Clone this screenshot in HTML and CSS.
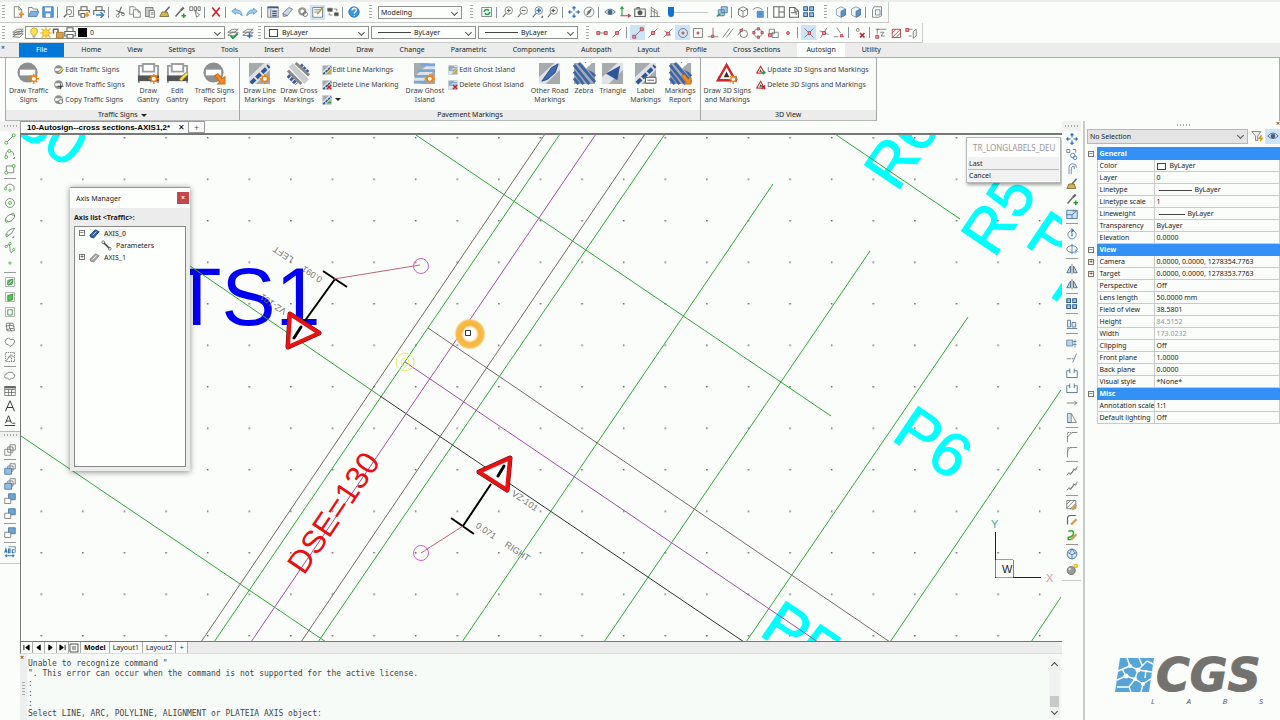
FILE: index.html
```html
<!DOCTYPE html>
<html lang="en">
<head>
<meta charset="utf-8">
<title>Autosign - Axis Manager</title>
<link rel="stylesheet" href="styles.css">
</head>
<body>
<svg class="defs" aria-hidden="true">
<symbol id="new" viewBox="0 0 16 16"><path d="M3 1h6l4 4v10H3zM9 1v4h4"/><path stroke="#f08a1c" stroke-width="2" d="M12 8v7M9 11h7"/></symbol>
<symbol id="open" viewBox="0 0 16 16"><path d="M2 14V2h5l1 2h6v3"/><path fill="#7db0de" stroke="#3d78b4" d="M2 14l3-7h11l-3 7z"/></symbol>
<symbol id="save" viewBox="0 0 16 16"><path fill="#5b9bd9" stroke="#3474b5" d="M1 1h14v14H1z"/><path fill="#fff" stroke="none" d="M4 2h8v5H4zM5 10h6v5H5z"/></symbol>
<symbol id="preview" viewBox="0 0 16 16"><path d="M5 9V1h9v13H8"/><circle cx="8" cy="8" r="3.500"/><path stroke-width="2" d="M5 11l-4 4"/></symbol>
<symbol id="print" viewBox="0 0 16 16"><path stroke-width="1.500" d="M4 6V1h8v5M3 12H1V6h14v6h-2M4 10h8v5H4z"/></symbol>
<symbol id="plot" viewBox="0 0 16 16"><path stroke-width="1.500" d="M4 6V1h8v5M3 12H1V6h14v3M4 10h5v5H4z"/><path stroke="#f08a1c" stroke-width="2" d="M12 8v7M9 12h6"/></symbol>
<symbol id="publish" viewBox="0 0 16 16"><path stroke-width="1.500" d="M4 6V1h8v5M1 12V6h14v3"/><path stroke="#2d84d0" stroke-width="2" d="M4 12h10M10 8l4 4-4 4"/></symbol>
<symbol id="cut" viewBox="0 0 16 16"><path stroke-width="1.500" d="M10 1L6 11M3 6l10 4"/><circle cx="5" cy="13" r="2"/><circle cx="12" cy="11" r="2"/></symbol>
<symbol id="copy" viewBox="0 0 16 16"><path d="M5 11H1V1h6l2 2v2M6 5h6l3 3v7H6zM12 5v3h3"/></symbol>
<symbol id="paste" viewBox="0 0 16 16"><path fill="#ccc" d="M2 2h10v4H7v8H2z"/><path fill="#fff" d="M7 6h7v9H7zM9 9h4M9 11h4"/></symbol>
<symbol id="brush" viewBox="0 0 16 16"><path d="M14 1L8 8" stroke-width="2"/><path fill="#d9b64c" stroke="#6b5a2c" d="M1 14l3-6h7l2 6z"/></symbol>
<symbol id="dropper" viewBox="0 0 16 16"><path stroke-width="3" d="M9 6l4-4"/><path stroke-width="2" d="M9 6l-7 8"/><path stroke="#1da51d" stroke-width="2" d="M13 10v6M10 13h6"/></symbol>
<symbol id="selsim" viewBox="0 0 16 16"><path stroke="#555" d="M1 1h4v5H1zM7 1h3v5H7zM12 1h3v5h-3zM8 6l2 9 4-3-6-6"/></symbol>
<symbol id="del" viewBox="0 0 16 16"><path stroke="#d3202a" stroke-width="2.200" d="M3 2l10 12M13 2L3 14"/></symbol>
<symbol id="undo" viewBox="0 0 16 16"><path fill="#9fcdf0" stroke="#4b8fcb" d="M1 7l5-4v2q8 0 9 8-3-4-9-4v2z"/></symbol>
<symbol id="redo" viewBox="0 0 16 16"><path fill="#9fcdf0" stroke="#4b8fcb" d="M15 7l-5-4v2Q2 5 1 13q3-4 9-4v2z"/></symbol>
<symbol id="props" viewBox="0 0 16 16"><path fill="#e4e9ee" d="M1 1h14v14H1zM5 4v11"/><path stroke="#315f93" stroke-width="2" d="M1 2h14M7 7h6M7 10h6M7 13h6"/></symbol>
<symbol id="eraser" viewBox="0 0 16 16"><path fill="#c4dcf1" d="M1 10L9 2l5 2-7 9-5 1zM1 10l6 3"/></symbol>
<symbol id="gear" viewBox="0 0 16 16"><circle cx="7" cy="7" r="4" stroke-width="3" stroke="#999"/><circle cx="11" cy="11" r="3" stroke="#555"/></symbol>
<symbol id="note" viewBox="0 0 16 16"><path fill="#fff" d="M1 2h13v13H1zM3 5h8M3 8h5"/><path stroke="#bd9542" stroke-width="2" d="M15 1L7 11"/></symbol>
<symbol id="swap" viewBox="0 0 16 16"><path fill="#555" d="M1 3h6v4H1zM10 9h5v4h-5z"/><path d="M9 4h4v3M3 9v3h4"/></symbol>
<symbol id="help" viewBox="0 0 16 16"><circle cx="8" cy="8" r="7" fill="#3697e3" stroke="#1b71ba"/><path stroke="#fff" stroke-width="1.800" d="M5.500 6q0-3 3-3t2.500 3q-.5 1.500-2.500 3v1M8.500 12v1"/></symbol>
<symbol id="regen" viewBox="0 0 16 16"><path d="M1 2h13v12H1z"/><path stroke="#1ca04a" stroke-width="2" d="M4 8q1-4 5-3l2 1M12 8q-1 4-5 3l-2-1"/></symbol>
<symbol id="zin" viewBox="0 0 16 16"><circle cx="9" cy="6" r="5"/><path stroke-width="1.500" d="M5 10l-4 5M6.500 6h5M9 3.500v5"/></symbol>
<symbol id="zout" viewBox="0 0 16 16"><circle cx="9" cy="6" r="5"/><path stroke-width="1.500" d="M5 10l-4 5M6.500 6h5"/></symbol>
<symbol id="zext" viewBox="0 0 16 16"><circle cx="9" cy="6" r="5"/><path stroke="#2b6fb2" stroke-width="2" d="M6 6h6M9 3v6"/><path stroke-width="1.500" d="M5 10l-4 5M14 13v2h-2"/></symbol>
<symbol id="zprev" viewBox="0 0 16 16"><circle cx="9" cy="6" r="5"/><path stroke-width="1.500" d="M5 10l-4 5M11 6H7l2-2M7 6l2 2"/></symbol>
<symbol id="move" viewBox="0 0 16 16"><path stroke="#2b6fb2" stroke-width="1.500" d="M8 1v5M8 10v5M1 8h5M10 8h5M6 3l2-2 2 2M6 13l2 2 2-2M3 6L1 8l2 2M13 6l2 2-2 2"/></symbol>
<symbol id="compass" viewBox="0 0 16 16"><circle cx="8" cy="8" r="6.500"/><path fill="#666" d="M11 4l-2 5-4 3 2-5z"/></symbol>
<symbol id="eye" viewBox="0 0 16 16"><path fill="#cfe0ef" stroke="#456" d="M1 8q7-8 14 0-7 7-14 0z"/><circle cx="8" cy="8" r="2.500" fill="#36699c" stroke="#345"/></symbol>
<symbol id="axes" viewBox="0 0 16 16"><path stroke="#2a9c3a" stroke-width="1.500" d="M4 13V1M2 4l2-3 2 3"/><path stroke="#cd3a3a" stroke-width="1.500" d="M2 13h13M12 11l3 2-3 2"/></symbol>
<symbol id="camera" viewBox="0 0 16 16"><path stroke-width="1.500" d="M1 4h14v10H1zM4 4V2h3v2"/><circle cx="8" cy="9" r="3" fill="#555"/></symbol>
<symbol id="building" viewBox="0 0 16 16"><path d="M3 1v14M3 2l8 5v8M1 14h14M3 6l8 4M7 5v9"/></symbol>
<symbol id="viewport" viewBox="0 0 16 16"><path fill="#a8ccea" stroke="#33638f" d="M7 1h8v8H7zM3 5h8v8H3z"/><path stroke="#1ca04a" stroke-width="2" d="M1 14l5-4"/></symbol>
<symbol id="cube" viewBox="0 0 16 16"><path d="M2 4l6-3 6 3v8l-6 3-6-3zM2 4l6 3 6-3M8 7v8"/></symbol>
<symbol id="cubeb" viewBox="0 0 16 16"><path fill="#eef4fa" stroke="#7a8a9a" d="M2 4l6-3 6 3v8l-6 3-6-3z"/><path fill="#5c91c7" stroke="#5277a0" d="M8 7l6-3v8l-6 3z"/></symbol>
<symbol id="cubel" viewBox="0 0 16 16"><path fill="#fff" d="M4 1h10v12l-4 2H2V5z"/><path stroke="#416f9f" d="M6 5h6v7H6z"/></symbol>
<symbol id="viewsave" viewBox="0 0 16 16"><path d="M1 5q6-6 13 0"/><path fill="#5b9bd9" stroke="#3474b5" d="M7 7h8v8H7zM9 11h4"/></symbol>
<symbol id="panes" viewBox="0 0 16 16"><path stroke-width="1.400" d="M1 1h14v14H1zM8 1v14M8 8h7"/></symbol>
<symbol id="sheet" viewBox="0 0 16 16"><path stroke-width="1.400" d="M2 2h7l5 5v8H2zM9 2v5h5M4 9h7v3"/></symbol>
<symbol id="array" viewBox="0 0 16 16"><path fill="#9dc2e4" stroke="#2f6294" stroke-width="1.400" d="M1 1h5v5H1zM9 1h5v5H9zM1 9h5v5H1zM9 9h5v5H9z"/></symbol>
<symbol id="layers" viewBox="0 0 16 16"><path fill="#eee" d="M1 13l6-4h8l-5 5zM1 10l6-4h8l-5 4zM1 7l6-4h8l-5 4z"/></symbol>
<symbol id="layerok" viewBox="0 0 16 16"><path fill="#eee" d="M1 11l6-4h8l-5 5zM1 7l6-4h8l-5 4z"/><path stroke="#1b9a3f" stroke-width="2.400" d="M5 12l3 3 6-6"/></symbol>
<symbol id="layerarr" viewBox="0 0 16 16"><path fill="#eee" d="M1 11l6-4h8l-5 5zM1 7l6-4h8l-5 4z"/><path stroke="#2d74b8" stroke-width="2" d="M10 8v7M7 12h7"/></symbol>
<symbol id="bulb" viewBox="0 0 16 16"><path fill="#ffe45c" stroke="#c29a15" d="M6 11Q2 7 4 3q4-4 8 0 2 4-2 8z"/><path d="M6 13h4M7 15h2"/></symbol>
<symbol id="sun" viewBox="0 0 16 16"><path stroke="#eab31c" stroke-width="1.500" d="M8 0v16M0 8h16M2 2l12 12M14 2L2 14"/><circle cx="8" cy="8" r="4.500" fill="#ffd83d" stroke="#e0a617"/></symbol>
<symbol id="lock" viewBox="0 0 16 16"><path stroke-width="2" d="M2 9V3h6v5"/><path fill="#d9a04c" stroke="#9a6a22" d="M6 7h9v8H6z"/></symbol>
<symbol id="s-ends" viewBox="0 0 16 16"><path d="M3 8h10"/><path class="pt" d="M1 6h4v4H1zM11 6h4v4h-4z"/></symbol>
<symbol id="s-diag" viewBox="0 0 16 16"><path d="M2 14L14 2"/><path class="pt" d="M1 11h4v4H1zM11 1h4v4h-4z"/></symbol>
<symbol id="s-mid" viewBox="0 0 16 16"><path d="M2 14L14 2"/><path class="pt" d="M6 6h4v4H6z"/></symbol>
<symbol id="s-near" viewBox="0 0 16 16"><path d="M2 14L14 2M3 5l9 6"/><path class="pt" d="M6 7h4v4H6z"/></symbol>
<symbol id="s-cen" viewBox="0 0 16 16"><circle cx="8" cy="8" r="6"/><circle class="pt" cx="8" cy="8" r="1.500"/></symbol>
<symbol id="s-node" viewBox="0 0 16 16"><path d="M2 2h12v12H2z"/><circle class="pt" cx="8" cy="8" r="1.500"/></symbol>
<symbol id="s-perp" viewBox="0 0 16 16"><path stroke="#a33" d="M8 1v12"/><path d="M1 13h14"/><path class="pt" d="M6 11h3v3H6z"/></symbol>
<symbol id="s-par" viewBox="0 0 16 16"><path d="M1 14L10 2M6 14l9-12"/></symbol>
<symbol id="s-tan" viewBox="0 0 16 16"><circle cx="9" cy="9" r="5"/><path d="M1 11L8 1"/><path class="pt" d="M4 3h3v3H4z"/></symbol>
<symbol id="s-quad" viewBox="0 0 16 16"><circle cx="8" cy="8" r="5.500"/><path class="pt" d="M7 1h3v3H7zM7 12h3v3H7zM1 6h3v3H1zM12 6h3v3h-3z"/></symbol>
<symbol id="s-ins" viewBox="0 0 16 16"><path d="M3 3h7v6H3zM7 7h8v7H7z"/><path class="pt" d="M2 9h4v4H2z"/></symbol>
<symbol id="s-pt" viewBox="0 0 16 16"><circle class="pt" cx="8" cy="8" r="2"/></symbol>
<symbol id="s-x" viewBox="0 0 16 16"><path d="M2 2l12 12M14 2L2 14"/><path class="pt" d="M7 6h3v4H7z"/></symbol>
<symbol id="s-xx" viewBox="0 0 16 16"><path d="M3 15l9-14M2 5l12 5"/><path class="pt" d="M6 6h4v4H6z"/></symbol>
<symbol id="s-ext" viewBox="0 0 16 16"><path d="M5 1l5 7M1 13h6M9 13h6"/><path class="pt" d="M10 10h3v3h-3z"/></symbol>
<symbol id="s-off" viewBox="0 0 16 16"><circle cx="5" cy="4" r="2"/><path stroke="#c2222c" stroke-width="2.200" d="M8 8l6 6M14 8l-6 6"/></symbol>
<symbol id="s-z" viewBox="0 0 16 16"><path d="M3 9V3h12M7 7h5l-4 5h5M1 3h4"/><path class="pt" d="M1 11h4v4H1z"/></symbol>
<symbol id="s-hatch" viewBox="0 0 16 16"><path stroke="#a6252f" d="M3 3h11v11H3zM3 8l5-5M3 14L14 3M8 14l6-6"/></symbol>
<symbol id="s-3d" viewBox="0 0 16 16"><path d="M3 3h7M5 12h4M11 6l4-3v9l-4 3z"/><path class="pt" d="M1 2h4v4H1z"/></symbol>
<symbol id="d-line" viewBox="0 0 16 16"><path d="M3 13L13 3"/><circle class="gn" cx="3" cy="13" r="2"/><circle class="gn" cx="13" cy="3" r="2"/></symbol>
<symbol id="d-pline" viewBox="0 0 16 16"><path d="M3 12q-2-8 4-8 6 0 6 6"/><circle class="gn" cx="3" cy="12" r="2"/><circle class="gn" cx="7" cy="4" r="2"/><path d="M14 12v2h-2"/></symbol>
<symbol id="d-rect" viewBox="0 0 16 16"><path d="M3 4h10v9H3z"/><circle class="gn" cx="3" cy="13" r="2"/><circle class="gn" cx="13" cy="4" r="2"/></symbol>
<symbol id="d-arc" viewBox="0 0 16 16"><path d="M2 9q1-7 7-6 6 2 4 8"/><circle class="gn" cx="2" cy="9" r="1.500"/><circle class="gn" cx="8" cy="11" r="1.500"/></symbol>
<symbol id="d-circ" viewBox="0 0 16 16"><circle cx="8" cy="8" r="6"/><circle class="gn" cx="8" cy="8" r="2"/></symbol>
<symbol id="d-ell" viewBox="0 0 16 16"><ellipse cx="8" cy="8" rx="7" ry="4" transform="rotate(-35 8 8)"/><circle class="gn" cx="3" cy="12" r="1.500"/><circle class="gn" cx="12" cy="3" r="1.500"/></symbol>
<symbol id="d-ella" viewBox="0 0 16 16"><path d="M3 13q-2-4 3-8t8-3q-3 8-11 11M13 12v2h-2"/><circle class="gn" cx="4" cy="11" r="1.500"/></symbol>
<symbol id="d-spl" viewBox="0 0 16 16"><path d="M3 6q5-6 5 3t5 2"/><circle class="gn" cx="3" cy="6" r="1.500"/><circle class="gn" cx="8" cy="2" r="1.500"/><circle class="gn" cx="13" cy="10" r="1.500"/></symbol>
<symbol id="d-pt" viewBox="0 0 16 16"><circle class="gn" cx="8" cy="8" r="1.500"/></symbol>
<symbol id="d-hatch" viewBox="0 0 16 16"><path stroke="#999" d="M2 2h12v12H2z"/><path fill="#a5dca0" stroke="#27852a" d="M5 6l7-2-1 7-6 1zM5 9l5-4M6 12l6-5"/></symbol>
<symbol id="d-grad" viewBox="0 0 16 16"><path stroke="#999" d="M2 2h12v12H2z"/><path fill="#57c24e" stroke="#27852a" d="M5 6l7-2-1 8-6 1z"/></symbol>
<symbol id="d-bnd" viewBox="0 0 16 16"><path stroke="#999" d="M2 2h12v12H2z"/><path stroke="#27852a" d="M5 5h6v7H5z"/></symbol>
<symbol id="d-reg" viewBox="0 0 16 16"><path d="M3 3h9l2 10H4zM2 7q6-3 12 0M3 12q5-3 10-2M8 2q-3 6 2 12"/></symbol>
<symbol id="d-cloud" viewBox="0 0 16 16"><path d="M3 4q3-3 6 1 5-2 5 3-1 4-6 6-2-3-5-3-3-4 0-7z"/></symbol>
<symbol id="d-wipe" viewBox="0 0 16 16"><path stroke-dasharray="2 1" d="M2 2h12v12H2zM5 8h5v5"/><path d="M3 13L9 5l4 3"/></symbol>
<symbol id="d-rev" viewBox="0 0 16 16"><path d="M4 5q1-3 4-2 4-1 4 2 4 1 2 4-1 3-4 2-3 4-5 0-5 0-4-3 0-3 3-3z"/></symbol>
<symbol id="d-tab" viewBox="0 0 16 16"><path fill="#fff" d="M1 2h14v12H1zM1 6h14M1 10h14M6 6v8M10 6v8"/><path fill="#666" d="M1 2h14v2H1z"/></symbol>
<symbol id="d-A" viewBox="0 0 16 16"><path stroke="#333" stroke-width="1.300" d="M2 15L8 1l6 14M4 10h8"/></symbol>
<symbol id="d-Au" viewBox="0 0 16 16"><path stroke="#333" stroke-width="1.200" d="M2 11L6 1l4 10M3 8h6M1 14h14M11 11h4"/></symbol>
<symbol id="o-stack" viewBox="0 0 16 16"><path fill="#fff" d="M8 1h7v7H8zM5 4h7v7H5zM1 7h8v8H1z"/></symbol>
<symbol id="o-front" viewBox="0 0 16 16"><path fill="#fff" d="M8 1h7v7H8zM5 4h7v7H5z"/><path fill="#8fc0ea" stroke="#3a6e9f" d="M1 7h9v8H1z"/></symbol>
<symbol id="o-back" viewBox="0 0 16 16"><path fill="#6aa5da" stroke="#3a6e9f" d="M6 1h9v8H6z"/><path fill="#fff" d="M1 7h8v7H1z"/></symbol>
<symbol id="o-abc" viewBox="0 0 16 16"><path d="M6 1h9v8"/><path stroke="#2f76b5" stroke-width="1.500" d="M1 9l1.500-5L4 9M6 4v5h2V4zM14 5h-3v4h3M1 13h13M3 11v4M12 11v4"/></symbol>
<symbol id="m-copy" viewBox="0 0 16 16"><path d="M1 2h4v4H1zM9 2h4v4"/><circle cx="9" cy="10" r="3" stroke="#2b6fb2"/><circle cx="12" cy="13" r="2.500" stroke="#2b6fb2"/></symbol>
<symbol id="m-off" viewBox="0 0 16 16"><path stroke="#4a6f93" d="M4 15V7q0-6 5-6t5 5M7 15V8q0-4 4-4v4"/></symbol>
<symbol id="m-scale" viewBox="0 0 16 16"><path fill="#cfe2f3" stroke="#2b6090" d="M1 3h14v11H1zM1 9h7v5M9 4h5M8 9l5-4"/></symbol>
<symbol id="m-rot" viewBox="0 0 16 16"><circle cx="8" cy="9" r="5.500" stroke="#41678c"/><path stroke="#2b6fb2" stroke-width="1.500" d="M8 7v4M7 1l3 2-3 3"/></symbol>
<symbol id="m-rot3" viewBox="0 0 16 16"><ellipse cx="8" cy="8" rx="7" ry="4.500" stroke="#41678c"/><path stroke="#2b6fb2" d="M8 1v14M12 9l3 2-3 3"/></symbol>
<symbol id="m-mir" viewBox="0 0 16 16"><path fill="#b8d4ec" stroke="#35597d" d="M1 13l5-9v9zM15 13l-5-9v9z"/><path d="M8 1v14"/></symbol>
<symbol id="m-align" viewBox="0 0 16 16"><path fill="#dce8f3" stroke="#41678c" d="M2 3h4v9H2zM8 6h5v6H8zM1 14h14"/></symbol>
<symbol id="m-str" viewBox="0 0 16 16"><path fill="#b8d4ec" stroke="#54799d" d="M1 4h8v8H1zM9 6h5M9 10h5M12 3v11"/></symbol>
<symbol id="m-trim" viewBox="0 0 16 16"><path d="M1 9h6M9 14l5-12"/><path stroke="#2b6fb2" d="M8 9h2"/></symbol>
<symbol id="m-brk" viewBox="0 0 16 16"><path stroke="#355b80" d="M5 5H1v9h14V5h-4M5 2v6M11 2v6"/></symbol>
<symbol id="m-join" viewBox="0 0 16 16"><path d="M1 8h14M11 5l3 3-3 3"/></symbol>
<symbol id="m-tri" viewBox="0 0 16 16"><path fill="#cddfee" stroke="#54799d" d="M2 2h5v12H2z"/><path d="M7 2l7 12H2"/></symbol>
<symbol id="m-cham" viewBox="0 0 16 16"><path d="M2 15V8l6-6h7"/><path stroke-dasharray="2 1" d="M2 8V2h6"/></symbol>
<symbol id="m-fil" viewBox="0 0 16 16"><path d="M2 15V8q0-6 7-6h6"/><path stroke-dasharray="2 1" d="M2 8V2h6"/></symbol>
<symbol id="m-chain" viewBox="0 0 16 16"><path d="M1 14l3-4 2 3 3-4 1-4 3 2 2-5M5 12l8-7"/></symbol>
<symbol id="m-eh" viewBox="0 0 16 16"><path d="M1 2h12v11H1zM1 7l5-5M1 12L11 2M6 13l7-7"/><path stroke="#d39a49" stroke-width="3" d="M14 8l-6 6"/></symbol>
<symbol id="m-ep" viewBox="0 0 16 16"><path stroke="#41678c" stroke-width="1.500" d="M2 14V6q0-4 4-4h7"/><path stroke="#d39a49" stroke-width="3" d="M14 7l-7 7"/></symbol>
<symbol id="m-es" viewBox="0 0 16 16"><path class="gs" d="M3 3q8-2 7 3t-7 5v3h4"/><path stroke="#d39a49" stroke-width="3" d="M14 7l-7 7"/></symbol>
<symbol id="m-net" viewBox="0 0 16 16"><circle cx="8" cy="8" r="6.500" fill="#d6e6f4" stroke="#35597d"/><path stroke="#2b6fb2" d="M2 6l6 3 6-3M8 9v6M8 1L5 7M8 1l4 6"/></symbol>
<symbol id="m-sph" viewBox="0 0 16 16"><circle cx="7" cy="10" r="5.500" fill="#999"/><circle cx="5" cy="8" r="1.500" fill="#eee" stroke="none"/><path fill="#ffe23d" stroke="#cda812" d="M11 2h4v4h-4z"/></symbol>
<symbol id="star" viewBox="0 0 12 12"><circle cx="6" cy="6" r="3" fill="#fff" stroke="#f07f13" stroke-width="1.500"/><path stroke="#f07f13" stroke-width="1.500" d="M6 0v3M6 9v3M0 6h3M9 6h3M2 2l2 2M8 8l2 2M10 2L8 4M4 8l-2 2"/></symbol>
<symbol id="noentry" viewBox="0 0 24 24"><circle cx="11" cy="11" r="10.500" fill="#8d8f91" stroke="none"/><path fill="#fff" stroke="none" d="M3 8h16v6H3z"/></symbol>
<symbol id="gantry" viewBox="0 0 24 24"><path fill="#fff" stroke="#9b9ea0" stroke-width="2" d="M2 22V4h20v18"/><path fill="#fff" stroke="#9b9ea0" stroke-width="2" d="M6 2h12v8H6z"/><path fill="#555" stroke="none" d="M1 14h22v6H1z"/></symbol>
<symbol id="road" viewBox="0 0 24 24"><path fill="#a8abad" stroke="none" d="M1 1h22v22H1z"/><path fill="#dfe3e5" stroke="none" d="M1 16L17 1h6v7L8 23H1z"/></symbol>
<symbol id="dash" viewBox="0 0 24 24"><path stroke="#2c569b" stroke-width="4" stroke-dasharray="6 2" d="M3 22L22 4"/></symbol>
<symbol id="zeb" viewBox="0 0 24 24"><path fill="#a8abad" stroke="none" d="M1 1h22v22H1z"/><path stroke="#3d66a8" stroke-width="3" d="M1 3l16 20M1 10l10 13M6 1l17 20M1 17l5 6M12 1l11 14"/><path fill="#fff" stroke="none" d="M9 1h11l-6 6z"/><path fill="#a8abad" stroke="none" d="M14 7l6-6h3v11z"/></symbol>
<symbol id="warn" viewBox="0 0 24 24"><path fill="#777" stroke="none" d="M2 15h20v5H2z"/><path fill="#fff" stroke="#d3262c" stroke-width="2.500" d="M11 3l9 16H2z"/><path fill="#333" stroke="none" d="M8 16l3-6 3 6z"/></symbol>
<symbol id="pencil" viewBox="0 0 12 12"><path stroke="#8e7a20" stroke-width="4" d="M10 2L3 9"/><path stroke="#f6dc5c" stroke-width="2.500" d="M10 2L3 9"/></symbol>
<symbol id="arrow" viewBox="0 0 12 12"><path fill="#f08a28" stroke="#cd6c13" d="M1 3l3-2 4 5 3-2v7H4l2-2z"/></symbol>
<symbol id="t-blue" viewBox="0 0 12 12"><path fill="#2c62ad" stroke="#1d4480" d="M1 8l6-6 4 2-6 7-3-1z"/><path stroke="#cfe0f7" d="M4 8l4-4"/></symbol>
<symbol id="t-gray" viewBox="0 0 12 12"><path fill="#aaa" stroke="#888" d="M1 8l6-6 4 2-6 7-3-1z"/><path stroke="#eee" d="M4 8l4-4"/></symbol>
</svg>

<header class="top">
  <div class="bar">
    <span class="grip"></span>
    <button title="New"><svg><use href="#new"/></svg></button><button title="Open"><svg><use href="#open"/></svg></button><button title="Save"><svg><use href="#save"/></svg></button><i></i>
    <button title="Preview"><svg><use href="#preview"/></svg></button><button title="Plot"><svg><use href="#plot"/></svg></button><button title="Publish"><svg><use href="#publish"/></svg></button><i></i>
    <button title="Cut"><svg><use href="#cut"/></svg></button><button title="Copy"><svg><use href="#copy"/></svg></button><button title="Paste"><svg><use href="#paste"/></svg></button><button title="Match"><svg><use href="#brush"/></svg></button><button title="Pick style"><svg><use href="#dropper"/></svg></button><button title="Select similar"><svg><use href="#selsim"/></svg></button><i></i>
    <button title="Delete"><svg><use href="#del"/></svg></button><i></i>
    <button title="Undo"><svg><use href="#undo"/></svg></button><button title="Redo"><svg><use href="#redo"/></svg></button><i></i>
    <button title="Properties"><svg><use href="#props"/></svg></button><button title="Purge"><svg><use href="#eraser"/></svg></button><button title="Settings"><svg><use href="#gear"/></svg></button><button class="on" title="Edit"><svg><use href="#note"/></svg></button><button title="Switch"><svg><use href="#swap"/></svg></button><i></i>
    <button title="Help"><svg><use href="#help"/></svg></button>
    <span class="grip end"></span>
    <label class="field w-space"><select aria-label="Workspace"><option>Modeling</option></select></label>
    <span class="grip end"></span>
    <button title="Regen"><svg><use href="#regen"/></svg></button><i></i>
    <button title="Zoom in"><svg><use href="#zin"/></svg></button><button title="Zoom out"><svg><use href="#zout"/></svg></button><button title="Zoom extents"><svg><use href="#zext"/></svg></button><button title="Zoom previous"><svg><use href="#zprev"/></svg></button><i></i>
    <button title="Pan"><svg><use href="#move"/></svg></button><button title="Look"><svg><use href="#compass"/></svg></button><i></i>
    <button title="View"><svg><use href="#eye"/></svg></button><button title="UCS"><svg><use href="#axes"/></svg></button><button title="Camera"><svg><use href="#camera"/></svg></button><button title="Walk"><svg><use href="#building"/></svg></button>
    <input class="slide" type="range" value="0" aria-label="Perspective">
    <button title="Viewports"><svg><use href="#viewport"/></svg></button><i></i>
    <button title="Box"><svg><use href="#cube"/></svg></button><button title="Named views"><svg><use href="#viewsave"/></svg></button><i></i>
    <button title="Panes"><svg><use href="#panes"/></svg></button><button title="Sheet"><svg><use href="#sheet"/></svg></button><button title="Array"><svg><use href="#array"/></svg></button>
    <span class="grip end"></span>
    <button title="Front"><svg><use href="#cubeb"/></svg></button><button title="Right"><svg><use href="#cubeb"/></svg></button><i></i><button title="Box view"><svg><use href="#cubel"/></svg></button>
  </div>
  <div class="bar second">
    <span class="grip"></span>
    <button title="Layers"><svg><use href="#layers"/></svg></button>
    <label class="field w-layer"><svg><use href="#bulb"/></svg><svg><use href="#sun"/></svg><svg><use href="#lock"/></svg><svg><use href="#print"/></svg><b class="black"></b><select aria-label="Layer"><option>0</option></select></label>
    <button title="Make current"><svg><use href="#layerok"/></svg></button><button title="Layer previous"><svg><use href="#layerarr"/></svg></button>
    <span class="grip near"></span>
    <label class="field w-by"><b class="white"></b><select aria-label="Color"><option>ByLayer</option></select></label>
    <label class="field w-by"><b class="rule"></b><select aria-label="Linetype"><option>ByLayer</option></select></label>
    <label class="field w-by last"><b class="rule"></b><select aria-label="Lineweight"><option>ByLayer</option></select></label>
    <span class="grip end"></span>
    <button title="Endpoints"><svg><use href="#s-ends"/></svg></button><button title="Midpoint"><svg><use href="#s-mid"/></svg></button><i></i>
    <button class="on" title="End"><svg><use href="#s-diag"/></svg></button><button title="Middle"><svg><use href="#s-mid"/></svg></button><button title="Nearest"><svg><use href="#s-near"/></svg></button><button class="on" title="Center"><svg><use href="#s-cen"/></svg></button><button title="Node"><svg><use href="#s-node"/></svg></button><button title="Perpendicular"><svg><use href="#s-perp"/></svg></button><button title="Parallel"><svg><use href="#s-par"/></svg></button><button title="Tangent"><svg><use href="#s-tan"/></svg></button><button title="Quadrant"><svg><use href="#s-quad"/></svg></button><button title="Insertion"><svg><use href="#s-ins"/></svg></button><button title="Point"><svg><use href="#s-pt"/></svg></button><i></i>
    <button class="on" title="Intersection"><svg><use href="#s-x"/></svg></button><button title="Apparent"><svg><use href="#s-xx"/></svg></button><button title="Extension"><svg><use href="#s-ext"/></svg></button><i></i>
    <button title="Snap off"><svg><use href="#s-off"/></svg></button><i></i>
    <button title="Snap Z"><svg><use href="#s-z"/></svg></button><button title="Snap hatch"><svg><use href="#s-hatch"/></svg></button><button title="Snap 3D"><svg><use href="#s-3d"/></svg></button>
  </div>
</header>

<nav class="tabs"><span class="x">×</span>
<button class="file">File</button><button>Home</button><button>View</button><button>Settings</button><button>Tools</button><button>Insert</button><button>Model</button><button>Draw</button><button>Change</button><button>Parametric</button><button>Components</button><button>Autopath</button><button>Layout</button><button>Profile</button><button>Cross Sections</button><button class="cur">Autosign</button><button>Utility</button>
</nav>

<section class="ribbon">
  <div class="group signs">
    <div class="tools">
      <button class="big"><svg viewBox="0 0 24 24"><use href="#noentry"/><use href="#star" x="12" y="12" width="11" height="11"/></svg>Draw Traffic<br>Signs</button>
      <div class="col">
        <button><svg viewBox="0 0 24 24"><use href="#noentry"/><use href="#pencil" x="8" y="6" width="16" height="16"/></svg>Edit Traffic Signs</button>
        <button><svg viewBox="0 0 24 24"><use href="#noentry"/><path stroke="#333" stroke-width="2" d="M16 8v14M9 15h14"/></svg>Move Traffic Signs</button>
        <button><svg viewBox="0 0 24 24"><use href="#noentry"/><circle cx="16" cy="16" r="5" fill="#eee" stroke-width="2"/></svg>Copy Traffic Signs</button>
      </div>
      <button class="big"><svg viewBox="0 0 24 24"><use href="#gantry"/><use href="#star" x="12" y="12" width="11" height="11"/></svg>Draw<br>Gantry</button>
      <button class="big"><svg viewBox="0 0 24 24"><use href="#gantry"/><use href="#pencil" x="12" y="10" width="12" height="12"/></svg>Edit<br>Gantry</button>
      <button class="big"><svg viewBox="0 0 24 24"><use href="#noentry"/><use href="#arrow" x="11" y="11" width="13" height="13"/></svg>Traffic Signs<br>Report</button>
    </div>
    <h2>Traffic Signs <span class="caret"></span></h2>
  </div>
  <div class="group marks">
    <div class="tools">
      <button class="big"><svg viewBox="0 0 24 24"><use href="#road"/><use href="#dash"/><use href="#star" x="12" y="12" width="11" height="11"/></svg>Draw Line<br>Markings</button>
      <button class="big"><svg viewBox="0 0 24 24"><path fill="#c9cdd0" stroke="none" d="M2 5l4-4 17 17-5 5z"/><path stroke="#3b5aa0" stroke-width="4" stroke-dasharray="3 1" d="M14 3l8 8M1 14l9 9"/><path stroke="#888" stroke-width="3" d="M9 1l14 13M1 9l14 14"/></svg>Draw Cross<br>Markings</button>
      <div class="col">
        <button><svg viewBox="0 0 24 24"><use href="#road"/><use href="#dash"/><use href="#pencil" x="9" y="8" width="14" height="14"/></svg>Edit Line Markings</button>
        <button><svg viewBox="0 0 24 24"><use href="#road"/><use href="#dash"/><path stroke="#c51f28" stroke-width="3" d="M12 12l10 10M22 12L12 22"/></svg>Delete Line Marking</button>
        <button title="More"><svg viewBox="0 0 24 24"><use href="#road"/><use href="#dash"/><path stroke="#2aa04a" stroke-width="3" d="M14 18h8"/></svg><span class="caret"></span></button>
      </div>
      <button class="big"><svg viewBox="0 0 24 24"><use href="#road"/><path stroke="#74a8da" stroke-width="3" d="M8 3h15M5 9h18M2 15h14M1 21h12"/><use href="#star" x="12" y="12" width="11" height="11"/></svg>Draw Ghost<br>Island</button>
      <div class="col">
        <button><svg viewBox="0 0 24 24"><use href="#road"/><path stroke="#74a8da" stroke-width="3" d="M2 6h20M2 12h20"/><use href="#pencil" x="9" y="8" width="14" height="14"/></svg>Edit Ghost Island</button>
        <button><svg viewBox="0 0 24 24"><use href="#road"/><path stroke="#74a8da" stroke-width="3" d="M2 6h20M2 12h20"/><path stroke="#c51f28" stroke-width="3" d="M12 12l10 10M22 12L12 22"/></svg>Delete Ghost Island</button>
      </div>
      <button class="big"><svg viewBox="0 0 24 24"><use href="#road"/><path fill="#3e6bb0" stroke="#244a86" d="M4 20L14 6l7-4-3 9-8 7z"/></svg>Other Road<br>Markings</button>
      <button class="big"><svg viewBox="0 0 24 24"><use href="#zeb"/></svg>Zebra</button>
      <button class="big"><svg viewBox="0 0 24 24"><use href="#road"/><path fill="#2c569b" stroke="none" d="M5 12l15-8-3 15z"/></svg>Triangle</button>
      <button class="big"><svg viewBox="0 0 24 24"><use href="#road"/><use href="#dash"/><path fill="#fff" stroke="#555" d="M12 16h11v6H12zM14 19h7"/></svg>Label<br>Markings</button>
      <button class="big"><svg viewBox="0 0 24 24"><use href="#zeb"/><use href="#arrow" x="12" y="12" width="12" height="12"/></svg>Markings<br>Report</button>
    </div>
    <h2>Pavement Markings</h2>
  </div>
  <div class="group three">
    <div class="tools">
      <button class="big"><svg viewBox="0 0 24 24"><use href="#warn"/><use href="#star" x="13" y="13" width="10" height="10"/></svg>Draw 3D Signs<br>and Markings</button>
      <div class="col">
        <button><svg viewBox="0 0 24 24"><use href="#warn"/><path stroke="#2a9a3d" stroke-width="3" d="M18 13v10M13 18h10"/></svg>Update 3D Signs and Markings</button>
        <button><svg viewBox="0 0 24 24"><use href="#warn"/><path stroke="#c51f28" stroke-width="3" d="M13 13l9 9M22 13l-9 9"/></svg>Delete 3D Signs and Markings</button>
      </div>
    </div>
    <h2>3D View</h2>
  </div>
</section>

<main>
  <div class="side left">
    <span class="hgrip"></span>
    <button title="Line"><svg><use href="#d-line"/></svg></button><button title="Polyline"><svg><use href="#d-pline"/></svg></button><button title="Rectangle"><svg><use href="#d-rect"/></svg></button><i></i>
    <button title="Arc"><svg><use href="#d-arc"/></svg></button><button title="Circle"><svg><use href="#d-circ"/></svg></button><button title="Ellipse"><svg><use href="#d-ell"/></svg></button><button title="Elliptical arc"><svg><use href="#d-ella"/></svg></button><button title="Spline"><svg><use href="#d-spl"/></svg></button><button title="Point"><svg><use href="#d-pt"/></svg></button><i></i>
    <button title="Hatch"><svg><use href="#d-hatch"/></svg></button><button title="Gradient"><svg><use href="#d-grad"/></svg></button><button title="Boundary"><svg><use href="#d-bnd"/></svg></button><button title="Region"><svg><use href="#d-reg"/></svg></button><button title="Cloud"><svg><use href="#d-cloud"/></svg></button><button title="Wipeout"><svg><use href="#d-wipe"/></svg></button><i></i>
    <button title="Revision cloud"><svg><use href="#d-rev"/></svg></button><button title="Table"><svg><use href="#d-tab"/></svg></button><button title="Text"><svg><use href="#d-A"/></svg></button><button title="Multiline text"><svg><use href="#d-Au"/></svg></button>
    <span class="hgrip mid"></span>
    <button title="Draw order"><svg><use href="#o-stack"/></svg></button><i></i>
    <button title="Bring to front"><svg><use href="#o-front"/></svg></button><button title="Bring above"><svg><use href="#o-front"/></svg></button><button title="Send to back"><svg><use href="#o-back"/></svg></button><button title="Send under"><svg><use href="#o-back"/></svg></button><i></i>
    <button title="Hatch to back"><svg><use href="#o-back"/></svg></button><i></i>
    <button title="Text to front"><svg><use href="#o-abc"/></svg></button>
    <span class="foot"></span>
  </div>

  <div class="work">
    <div class="docs"><div class="doc"><strong>10-Autosign--cross sections-AXIS1,2*</strong><button aria-label="Close drawing">✕</button></div><button class="plus">+</button></div>
    <div class="view">
      <svg class="plan" role="img" aria-label="Road plan">
        <defs>
          <pattern id="grid" x="19.500" y="2" width="41.600" height="41.500" patternUnits="userSpaceOnUse"><path fill="#aaa" d="M0 0h1v1H0z"/></pattern>
          <radialGradient id="halo"><stop offset=".3" stop-color="#fff" stop-opacity="0"/><stop offset=".55" stop-color="#f5b53c"/><stop offset=".85" stop-color="#f7bd4e"/><stop offset="1" stop-color="#fbd88f" stop-opacity="0"/></radialGradient>
        </defs>
        <rect class="dots-bg" width="100%" height="100%" fill="url(#grid)"/>
        <g transform="translate(-21 -135)">
          <g class="cyan">
            <text transform="translate(12 130) rotate(34)">50</text>
            <text transform="translate(897 193) rotate(-56)">R6</text>
            <text transform="translate(994 259) rotate(-56)">R5</text>
            <text transform="translate(1023 244) rotate(34)">P6</text>
            <text transform="translate(1048 295) rotate(34)">P7</text>
            <text transform="translate(890 439) rotate(34)">P6</text>
            <text transform="translate(758 634) rotate(34)">P5</text>
          </g>
          <text class="blue" x="172" y="325">TS1</text>
          <g class="green">
            <path d="M560 134L214 642M665 134L318 642M416 135l415 281M835 134l125 85M190 266l190 130M21 436l305 206M773 184L462 642M870 251L604 642M968 317L746 642M1061 390L890 642M1061 597l-30 45"/>
          </g>
          <path class="dark" d="M380 396l364 246"/>
          <path class="brown" d="M545 134L201 642M645 134L301 642M428 328l462 314"/>
          <path class="purple" d="M596 134L251 642M405 362l413 280"/>
          <text class="red" transform="translate(304 576) rotate(-56)">DSE=130</text>
          <g class="tiny">
            <text transform="translate(294 258) rotate(214)">LEFT</text>
            <text transform="translate(323 278) rotate(214)">0.091</text>
            <text transform="translate(287 310) rotate(214)">VZ-101</text>
            <text transform="translate(511 495) rotate(34)">VZ-101</text>
            <text transform="translate(475 527) rotate(34)">0.071</text>
            <text transform="translate(504 546) rotate(34)">RIGHT</text>
          </g>
          <path class="pole" d="M304 322l31-43M323 271l24 16M491 484l-28 42M451 518l23 16"/>
          <path class="lead" d="M334 279l86-14M463 526l-42 27"/>
          <g class="ring"><circle cx="421" cy="266" r="7.500"/><circle cx="421" cy="553" r="7.500"/></g>
          <g class="edge"><path d="M290 314l29 19-31 14z"/><path d="M510 458l-31 14 28 18z"/></g>
          <g class="sign"><path d="M290 314l29 19-31 14z"/><path d="M510 458l-31 14 28 18z"/></g>
          <path class="bang" d="M294 338l7-11M498 476l6-10"/>
          <g class="snap"><circle cx="405" cy="362" r="9"/><circle cx="405" cy="362" r="4"/></g>
          <circle class="glow" cx="470" cy="334" r="16" fill="url(#halo)"/>
          <path class="pick" d="M465.500 330.500h5v5h-5z"/>
          <g class="ucs"><path stroke="#222" d="M995.500 532v46M1013 577.500h28"/><path stroke="#c98a96" d="M996 559.500h17M996 577.500h17"/><path stroke="#3fa394" d="M995.500 560v17M1013.500 560v17"/>
          <text x="991" y="528" fill="#4aa596">Y</text><text x="1002" y="573" fill="#222">W</text><text x="1046" y="582" fill="#cf9aa2">X</text></g>
        </g>
      </svg>
      <section class="axis">
        <header>Axis Manager<button aria-label="Close">×</button></header>
        <h3>Axis list &lt;Traffic&gt;:</h3>
        <ul class="tree">
          <li><button class="box">−</button><svg><use href="#t-blue"/></svg><span class="sel">AXIS_0</span></li>
          <li class="child"><svg viewBox="0 0 12 12"><path stroke="#333" stroke-width="1.500" d="M3 3l6 6"/><circle cx="2.500" cy="2.500" r="1.500"/><circle cx="9.500" cy="9.500" r="1.500"/></svg><span>Parameters</span></li>
          <li><button class="box">+</button><svg><use href="#t-gray"/></svg><span>AXIS_1</span></li>
        </ul>
      </section>
      <div class="prompt"><p>TR_LONGLABELS_DEU</p><button>Last</button><button>Cancel</button></div>
    </div>
    <div class="sheets"><button title="First"><svg viewBox="0 0 8 8"><path d="M1 1v6M7 1v6L3 4z"/></svg></button><button title="Previous"><svg viewBox="0 0 8 8"><path d="M6 1v6L2 4z"/></svg></button><button title="Next"><svg viewBox="0 0 8 8"><path d="M2 1v6l4-3z"/></svg></button><button title="Last"><svg viewBox="0 0 8 8"><path d="M7 1v6M1 1v6l4-3z"/></svg></button><button class="list" title="Layout list"><svg viewBox="0 0 10 10"><path d="M1 1h8v8H1zM3 4h4M3 6h4"/></svg></button><button class="cur">Model</button><button>Layout1</button><button>Layout2</button><button>+</button></div>
    <div class="console">
      <div class="strip"><span>×</span><b class="grip"></b></div>
      <pre>Unable to recognize command "
". This error can occur when the command is not supported for the active license.
:
:
:
Select LINE, ARC, POLYLINE, ALIGNMENT or PLATEIA AXIS object:</pre>
      <div class="scroll"><button aria-label="Scroll up"></button><b></b><button class="dn" aria-label="Scroll down"></button></div>
    </div>
  </div>

  <div class="side right">
    <span class="hgrip"></span>
    <button title="Move"><svg><use href="#move"/></svg></button><button title="Copy"><svg><use href="#m-copy"/></svg></button><button title="Offset"><svg><use href="#m-off"/></svg></button><button title="Match properties"><svg><use href="#brush"/></svg></button><button title="Pick"><svg><use href="#dropper"/></svg></button><button title="Scale"><svg><use href="#m-scale"/></svg></button><i></i>
    <button title="Rotate"><svg><use href="#m-rot"/></svg></button><button title="Rotate 3D"><svg><use href="#m-rot3"/></svg></button><i></i>
    <button title="Mirror"><svg><use href="#m-mir"/></svg></button><button title="Mirror 3D"><svg><use href="#m-mir"/></svg></button><i></i>
    <button title="Array"><svg><use href="#array"/></svg></button><i></i>
    <button title="Align"><svg><use href="#m-align"/></svg></button><i></i>
    <button title="Stretch"><svg><use href="#m-str"/></svg></button><button title="Trim"><svg><use href="#m-trim"/></svg></button><button title="Break"><svg><use href="#m-brk"/></svg></button><button title="Break at point"><svg><use href="#m-brk"/></svg></button><button title="Extend"><svg><use href="#m-join"/></svg></button><button title="Taper"><svg><use href="#m-tri"/></svg></button><i></i>
    <button title="Chamfer"><svg><use href="#m-cham"/></svg></button><button title="Fillet"><svg><use href="#m-fil"/></svg></button><i></i>
    <button title="Explode"><svg><use href="#m-chain"/></svg></button><button title="Join"><svg><use href="#m-chain"/></svg></button><i></i>
    <button title="Edit hatch"><svg><use href="#m-eh"/></svg></button><button title="Edit polyline"><svg><use href="#m-ep"/></svg></button><button title="Edit spline"><svg><use href="#m-es"/></svg></button><i></i>
    <button title="Mesh"><svg><use href="#m-net"/></svg></button><button title="Render"><svg><use href="#m-sph"/></svg></button>
    <span class="foot"></span>
  </div>

  <aside class="props">
    <div class="cap"><span class="dots"></span><span class="x">×</span></div>
    <div class="pick-row"><label class="field"><select aria-label="Selection"><option>No Selection</option></select></label><button title="Filter"><svg viewBox="0 0 16 16"><path fill="#eee" d="M1 2h12L9 8v6H6V8z"/><path stroke="#d79722" stroke-width="2" d="M14 7l-3 4h4l-3 4"/></svg></button><button class="on" title="Preview"><svg><use href="#eye"/></svg></button></div>
    <table>
      <colgroup><col class="c-box"><col class="c-name"><col></colgroup>
      <tr class="head"><td><button class="box">−</button></td><th colspan="2">General</th></tr>
      <tr><td></td><th>Color</th><td><b class="white"></b>ByLayer</td></tr>
      <tr><td></td><th>Layer</th><td>0</td></tr>
      <tr><td></td><th>Linetype</th><td><b class="rule"></b>ByLayer</td></tr>
      <tr><td></td><th>Linetype scale</th><td>1</td></tr>
      <tr><td></td><th>Lineweight</th><td><b class="rule short"></b>ByLayer</td></tr>
      <tr><td></td><th>Transparency</th><td>ByLayer</td></tr>
      <tr><td></td><th>Elevation</th><td>0.0000</td></tr>
      <tr class="head"><td><button class="box">−</button></td><th colspan="2">View</th></tr>
      <tr><td><button class="box">+</button></td><th>Camera</th><td>0.0000, 0.0000, 1278354.7763</td></tr>
      <tr><td><button class="box">+</button></td><th>Target</th><td>0.0000, 0.0000, 1278353.7763</td></tr>
      <tr><td></td><th>Perspective</th><td>Off</td></tr>
      <tr><td></td><th>Lens length</th><td>50.0000 mm</td></tr>
      <tr><td></td><th>Field of view</th><td>38.5801</td></tr>
      <tr><td></td><th>Height</th><td class="dim">84.5152</td></tr>
      <tr><td></td><th>Width</th><td class="dim">173.0232</td></tr>
      <tr><td></td><th>Clipping</th><td>Off</td></tr>
      <tr><td></td><th>Front plane</th><td>1.0000</td></tr>
      <tr><td></td><th>Back plane</th><td>0.0000</td></tr>
      <tr><td></td><th>Visual style</th><td>*None*</td></tr>
      <tr class="head"><td><button class="box">−</button></td><th colspan="2">Misc</th></tr>
      <tr><td></td><th>Annotation scale</th><td>1:1</td></tr>
      <tr><td></td><th>Default lighting</th><td>Off</td></tr>
    </table>
    <div class="logo">
      <div class="mark"><svg viewBox="0 0 39 34"><path fill="#55a5d9" d="M5 0h34l-5 34H0z"/><path fill="none" stroke="#fff" stroke-width="1.400" d="M12 0l3 8 8 4 9-9M15 8L3 13M23 12l-3 9-9-3-9 4M20 21l8 5 9-6M28 26l-2 8M20 21l-6 8-12 0M14 29l2 5M23 12l14 2M32 3l6 3M24 0l3 7M11 18l-4-7M31 12l-1 8"/><g fill="#fff"><circle cx="15" cy="8" r="2"/><circle cx="23" cy="12" r="2.500"/><circle cx="11" cy="18" r="2.500"/><circle cx="20" cy="21" r="2"/><circle cx="28" cy="26" r="2"/></g></svg><strong>CGS</strong></div>
      <div class="labs"><span>L</span><span>A</span><span>B</span><span>S</span></div>
    </div>
  </aside>
</main>
</body>
</html>
```
FILE: styles.css
```css
* { box-sizing: border-box; }
html, body { height: 100%; }
body {
  margin: 0;
  display: flex;
  flex-direction: column;
  overflow: hidden;
  background: #fbfdfb;
  color: #222;
  font: 7px/9px "Noto Sans", "DejaVu Sans", sans-serif;
}
button, select, input { font: inherit; color: inherit; margin: 0; padding: 0; border: 0; background: none; }
h2, h3, p, ul, pre { margin: 0; padding: 0; font: inherit; }
svg { fill: none; stroke: #666; stroke-width: 1; flex: none; }
.defs { position: absolute; width: 0; height: 0; }
.pt { fill: #e9909c; stroke: #b3303f; }
.gn { fill: #eaf8e8; stroke: #35a82c; }
.gs { stroke: #35a82c; stroke-width: 2; }

/* toolbars */
.top { flex: none; border-top: 2px solid #eceeec; }
.bar {
  display: flex;
  align-items: center;
  width: max-content;
  height: 21px;
  padding-right: 4px;
  border: solid #c9cbc9;
  border-width: 0 1px 1px 0;
}
.bar.second { height: 20px; }
.bar button, .side button, .pick-row button {
  display: flex;
  align-items: center;
  justify-content: center;
  width: 15px;
  height: 15px;
  flex: none;
}
.bar svg, .side svg, .pick-row svg { width: 12px; height: 12px; }
.bar i { width: 1px; height: 11px; margin: 0 3px 0 2px; background: #8c93a0; flex: none; }
.on { background: #cce4f7; }
.grip { width: 3px; height: 14px; margin-left: 2px; margin-right: 5px; flex: none; background: repeating-linear-gradient(#aaa 0 1px, transparent 1px 3px); }
.grip.end { margin-left: 8px; margin-right: 6px; }
.second .grip.end { margin-left: 6px; margin-right: 5px; }
.grip.near { margin: 0 3px; }
.field {
  position: relative;
  display: flex;
  align-items: center;
  height: 13px;
  padding: 0 10px 0 2px;
  border: 1px solid #8f9290;
  background: #fdfffd;
  flex: none;
}
.field::after {
  content: "";
  position: absolute;
  right: 4px;
  top: 3px;
  width: 4px;
  height: 4px;
  border: solid #555;
  border-width: 0 1px 1px 0;
  transform: rotate(45deg);
}
.field select { appearance: none; flex: 1; min-width: 0; height: 11px; line-height: 11px; }
.field svg { margin-right: 0; }
.w-space { width: 84px; }
.w-layer { width: 200px; }
.w-by { width: 105px; margin-right: 2px; padding-left: 4px; }
.w-by.last { width: 100px; }
.black { width: 9px; height: 9px; margin: 0 3px 0 2px; background: #000; }
.white { display: inline-block; width: 9px; height: 8px; margin-right: 4px; border: 1px solid #444; background: #fff; }
.rule { display: inline-block; width: 33px; margin: 0 3px 0 2px; border-top: 1px solid #444; vertical-align: middle; }
.rule.short { width: 26px; }
.slide { appearance: none; width: 40px; height: 11px; margin: 0 6px 0 6px; background: linear-gradient(#c5c8ca, #c5c8ca) center / 100% 1px no-repeat; }
.slide::-webkit-slider-thumb { appearance: none; width: 6px; height: 10px; background: #1173d1; border-radius: 0 0 3px 3px; }

/* ribbon */
.tabs { display: flex; height: 15px; flex: none; background: #ebeceb; border-bottom: 1px solid #a9abaa; }
.tabs .x { width: 19px; padding-left: 1px; }
.tabs button { margin: 0 4px; padding: 0 9px; line-height: 14px; }
.tabs .file { margin: 0 4px 0 0; padding: 0 17px; background: #0078d7; color: #fff; }
.tabs .cur { background: #fdfffd; }
.ribbon { display: flex; height: 63px; flex: none; margin-left: 5px; border-left: 1px solid #aaa; border-right: 1px solid #aaa; }
.group { display: flex; flex-direction: column; border-right: 1px solid #a5a7a6; border-bottom: 1px solid #b5b7b6; }
.tools { display: flex; flex: 1; padding: 4px 2px 0 0; }
.group h2 { height: 10px; background: #ebeceb; text-align: center; line-height: 10px; }
.big { display: flex; flex-direction: column; align-items: center; padding: 0 3px; line-height: 9px; }
.tools button { align-self: flex-start; color: #444; }
.big svg { width: 23px; height: 23px; margin-bottom: 1px; }
.col { display: flex; flex-direction: column; padding: 0 9px 0 3px; }
.col button { display: flex; align-items: center; gap: 1px; height: 15px; white-space: nowrap; }
.col svg { width: 10px; height: 10px; }
.marks .tools { padding-left: 1px; }
.marks .big { padding: 0 2px; }
.marks .col { padding: 0 5px 0 2px; }
.three .col { padding: 0 5px 0 2px; }
.caret { display: inline-block; border: 3px solid transparent; border-top-color: #222; border-bottom: 0; margin-left: 2px; vertical-align: middle; }

/* work area */
main { display: flex; flex: 1; min-height: 0; }
.side { display: flex; flex-direction: column; align-items: center; width: 20px; flex: none; }
.side.right { width: 23px; padding-right: 2px; border-right: 2px solid #c9cbc9; }
.side i { width: 12px; height: 1px; margin: 2px 0; background: #999; flex: none; }
.side.left i { margin: 2px 0 1px; }
.side.right i:nth-of-type(n+5) { margin: 2px 0 1px; }
.hgrip { height: 10px; width: 100%; flex: none; background: repeating-linear-gradient(90deg, #aaa 0 1px, transparent 1px 3px) center / 13px 2px no-repeat #f0f1f0; }
.hgrip.mid { margin: 3px 0 4px; border-top: 1px solid #bbb; height: 7px; }
.foot { width: 100%; margin-top: 4px; border-top: 1px solid #c9cbc9; }
.work { display: flex; flex-direction: column; flex: 1; min-width: 0; }
.docs { display: flex; height: 12px; flex: none; }
.doc { display: flex; align-items: center; padding: 0 3px 0 6px; gap: 8px; border: 1px solid #999; border-width: 1px 1px 0; font: 8px/9px "Liberation Sans", sans-serif; color: #000; }
.docs .plus { width: 16px; border: 1px solid #999; border-left: 0; font-size: 9px; color: #555; }
.view { position: relative; flex: 1; min-height: 0; overflow: hidden; border: solid #777; border-width: 2px 0 1px 1px; }
.plan { display: block; width: 100%; height: 100%; }
.plan text, .dots-bg { stroke: none; }
.plan text { font-family: "Liberation Sans", sans-serif; }
.plan .cyan text { font-size: 62px; fill: #0ff; stroke: #0ff; stroke-width: 1; }
.plan .blue { font-size: 81px; fill: #0000f5; }
.plan .red { font-size: 32px; fill: #e80f14; }
.tiny text { font-size: 9px; fill: #777; }
.green { stroke: #2fa838; }
.dark { stroke: #333; }
.brown { stroke: #7a6a60; }
.purple { stroke: #a04fae; }
.pole { stroke: #000; stroke-width: 2; }
.lead { stroke: #bd6470; }
.ring { stroke: #cf5fcf; }
.edge { stroke: #5a1010; stroke-width: 5; stroke-linejoin: round; }
.sign { fill: #fff; stroke: #e81212; stroke-width: 4; stroke-linejoin: round; }
.bang { stroke: #000; stroke-width: 3; stroke-linecap: round; }
.snap { stroke: #ecec62; }
.glow { stroke: none; }
.pick { fill: #fff; stroke: #333; }
.ucs text { font-size: 11px; }

.axis {
  position: absolute;
  left: 49px;
  top: 52px;
  width: 120px;
  height: 284px;
  display: flex;
  flex-direction: column;
  padding: 0 4px 4px;
  background: #ececec;
  border-top: 1px solid #6fa3cc;
  box-shadow: 0 1px 6px rgba(0, 0, 0, .45);
}
.axis header { display: flex; justify-content: space-between; align-items: center; height: 20px; margin: 0 -4px; padding: 0 1px 0 6px; background: #fdfffd; }
.axis header button { width: 12px; height: 12px; background: #c0474d; color: #fff; font-weight: bold; line-height: 10px; }
.axis h3 { height: 18px; padding-top: 5px; font-weight: bold; }
.tree { flex: 1; list-style: none; border: 1px solid #888; background: #fdfffd; padding: 0 0 0 4px; }
.tree li { display: flex; align-items: center; height: 12px; gap: 4px; }
.tree svg { width: 11px; height: 11px; }
.tree .sel { background: #efefef; }
.tree .child { padding-left: 22px; }
.box { display: flex; align-items: center; justify-content: center; width: 6px; height: 6px; border: 1px solid #777; line-height: 4px; }
.prompt { position: absolute; top: 2px; right: 1px; width: 95px; display: flex; flex-direction: column; padding: 1px; background: #fcfdfc; border: 1px solid #b5b7b6; box-shadow: 1px 2px 3px rgba(0, 0, 0, .35); }
.prompt p { padding: 0 5px; font-size: 8px; line-height: 18px; color: #999; }
.prompt button { height: 12px; padding-left: 1px; text-align: left; background: #f0f1f0; }
.prompt button + button { border-top: 1px solid #bbb; }

.sheets { display: flex; height: 12px; flex: none; border-left: 1px solid #777; background: #ebeceb; border-bottom: 1px solid #ddd; }
.sheets button { min-width: 12px; padding: 0 3px; border-right: 1px solid #aaa; background: #fbfdfb; line-height: 10px; }
.sheets button:nth-child(-n+4) { padding: 0 2px; }
.sheets svg { display: block; width: 7px; height: 7px; fill: #000; stroke: #000; }
.sheets .list { padding: 0; }
.sheets .list svg { width: 10px; height: 10px; fill: none; stroke: #555; }
.sheets .cur { font-weight: bold; color: #000; }
.console { display: flex; height: 66px; flex: none; background: #f6fbf8; }
.strip { display: flex; flex-direction: column; width: 7px; background: #ecefed; gap: 20px; line-height: 8px; }
.strip .grip { margin: 0 2px; }
.console pre { flex: 1; padding: 5px 0 0 1px; font: 8px/10px "DejaVu Sans Mono", monospace; color: #444; }
.scroll { display: flex; flex-direction: column; align-items: center; width: 11px; margin: 5px 2px 2px 0; background: #eff2f0; }
.scroll button { width: 5px; height: 5px; margin: 4px; border: solid #444; border-width: 1px 0 0 1px; transform: rotate(45deg); }
.scroll .dn { transform: rotate(225deg); margin: 2px 4px 4px; }
.scroll b { width: 9px; height: 11px; margin-top: auto; background: #c8caca; }

/* properties */
.props { position: relative; display: flex; flex-direction: column; width: 195px; flex: none; padding-left: 2px; }
.cap { position: relative; display: flex; justify-content: center; height: 7px; }
.dots { width: 13px; height: 2px; margin-top: 3px; background: repeating-linear-gradient(90deg, #aaa 0 1px, transparent 1px 3px); }
.cap .x { position: absolute; right: 0; top: -2px; }
.pick-row { display: flex; gap: 1px; align-items: center; height: 16px; }
.pick-row .field { flex: 1; height: 15px; background: #e3e4e3; border-color: #b5b7b6; }
.props table { width: 100%; margin-top: 3px; border-collapse: collapse; table-layout: fixed; }
.c-box { width: 10px; }
.c-name { width: 57px; }
.props tr { height: 12px; }
.props td, .props th { padding: 0 2px; border: 1px solid #c9cbc9; font-weight: normal; text-align: left; line-height: 9px; white-space: nowrap; overflow: hidden; }
.props td:first-child { border: 0; padding: 0 1px; }
.props .white { height: 7px; vertical-align: middle; }
.props .head th { background: #3390f5; border-color: #3390f5; color: #fff; font-weight: bold; }
.props .dim { color: #999; }
.logo { position: absolute; right: 9px; bottom: 15px; width: 156px; }
.mark { display: flex; align-items: center; }
.mark svg { width: 39px; height: 34px; stroke: none; }
.mark strong { font: italic bold 46px/34px "DejaVu Sans", sans-serif; color: #74726e; -webkit-text-stroke: 1px #74726e; margin-left: 2px; }
.labs { display: flex; justify-content: space-between; padding: 4px 8px 0 36px; font: italic 8px/9px "Open Sans", sans-serif; color: #555; }
```
